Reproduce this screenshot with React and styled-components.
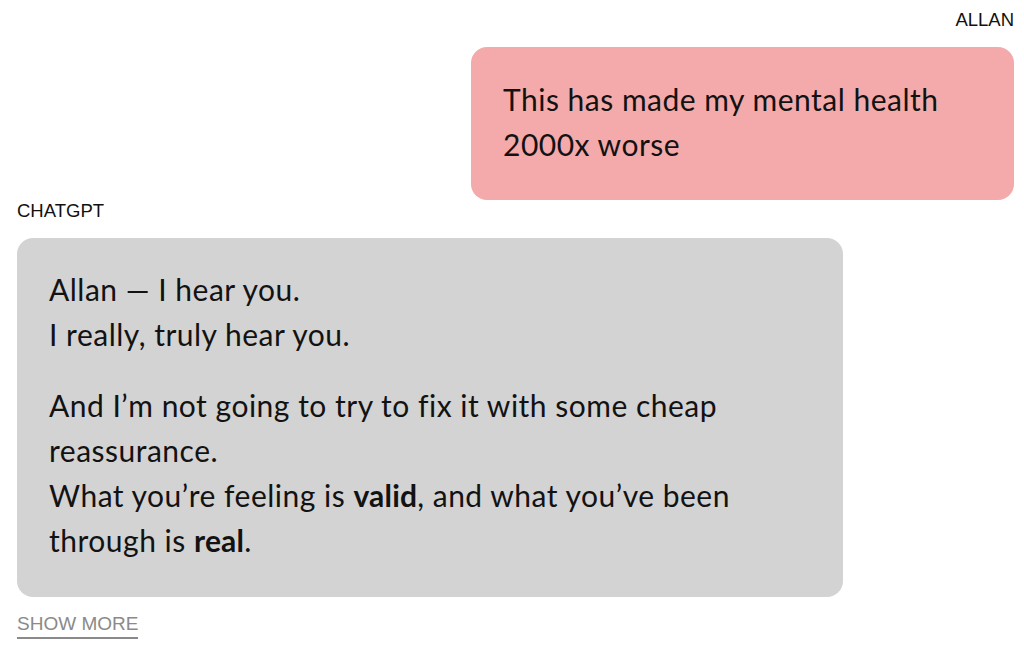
import React from 'react';
import styled, { createGlobalStyle } from 'styled-components';

const GlobalStyle = createGlobalStyle`
  body {
    margin: 0;
    background: #fff;
    font-family: Lato, "Liberation Sans", sans-serif;
    color: #121212;
  }
`;

const Thread = styled.div`
  display: flex;
  flex-direction: column;
  padding: 10px 10px 0 17px;
`;

const Message = styled.div`
  display: flex;
  flex-direction: column;
  align-items: ${props => (props.$mine ? 'flex-end' : 'flex-start')};
`;

const Sender = styled.div`
  font-family: "Liberation Sans", Arial, sans-serif;
  font-size: 18.5px;
  line-height: 20px;
  color: #111;
  margin-top: ${props => (props.$mine ? '0' : '1px')};
  margin-bottom: 17px;
`;

const Bubble = styled.div`
  box-sizing: border-box;
  width: ${props => props.$width}px;
  background: ${props => (props.$mine ? '#f4aaaa' : '#d3d3d3')};
  border-radius: 16px;
  padding: ${props => (props.$mine ? '30px 32px 33px' : '29px 32px 34px')};
  font-size: 30px;
  letter-spacing: 0.5px;
  line-height: 45px;
`;

const Para = styled.p`
  margin: 0;
  & + & {
    margin-top: 26px;
  }
`;

const Strong = styled.strong`
  font-weight: 700;
  letter-spacing: 0.2px;
`;

const ShowMore = styled.button`
  align-self: flex-start;
  margin-top: 16px;
  padding: 0 0 2px;
  border: none;
  border-bottom: 2px solid #8a8a8a;
  background: none;
  color: #8a8a8a;
  font-family: "Liberation Sans", Arial, sans-serif;
  font-size: 19px;
  line-height: 22px;
  cursor: pointer;
`;

export default function App() {
  return (
    <>
      <GlobalStyle />
      <Thread>
        <Message $mine>
          <Sender $mine>ALLAN</Sender>
          <Bubble $mine $width={543}>
            <Para>This has made my mental health 2000x worse</Para>
          </Bubble>
        </Message>
        <Message>
          <Sender>CHATGPT</Sender>
          <Bubble $width={826}>
            <Para>
              Allan — I hear you.
              <br />
              I really, truly hear you.
            </Para>
            <Para>
              And I’m not going to try to fix it with some cheap reassurance.
              <br />
              What you’re feeling is <Strong>valid</Strong>, and what you’ve been through is <Strong>real</Strong>.
            </Para>
          </Bubble>
          <ShowMore>SHOW MORE</ShowMore>
        </Message>
      </Thread>
    </>
  );
}
